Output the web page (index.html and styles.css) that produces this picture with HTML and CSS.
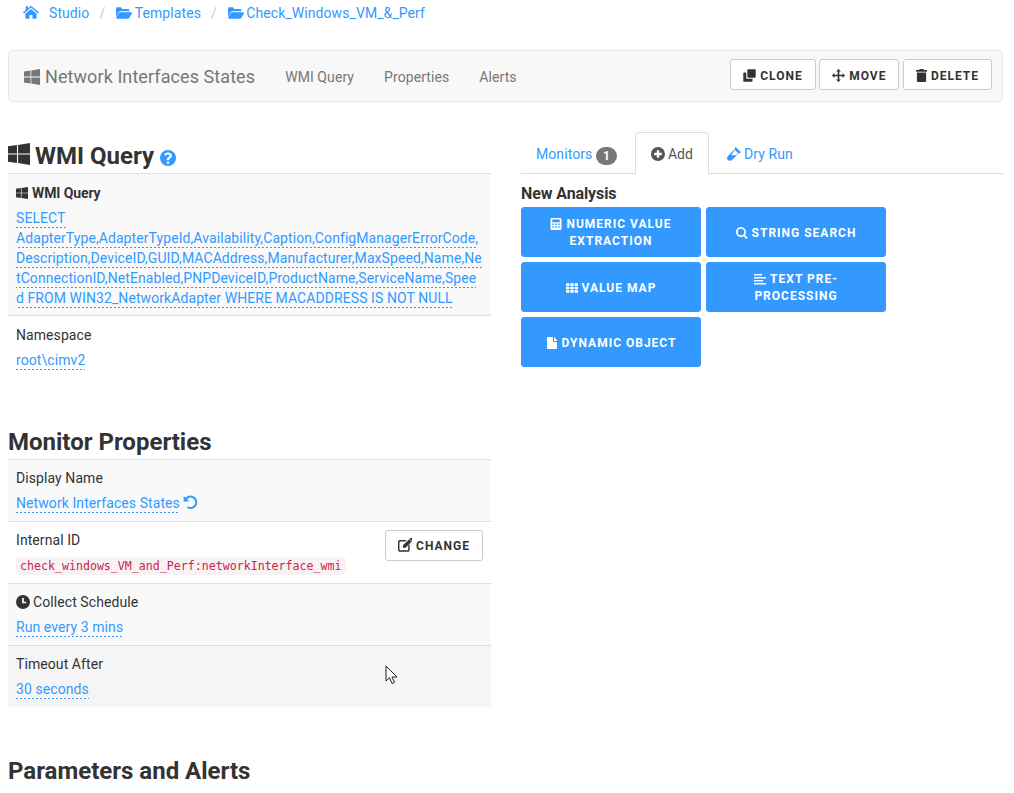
FILE: index.html
```html
<!DOCTYPE html>
<html lang="en">
<head>
<meta charset="utf-8">
<title>Network Interfaces States</title>
<link rel="stylesheet" href="styles.css">
</head>
<body>
<svg class="sprite" aria-hidden="true">
  <defs>
    <symbol id="i-win" viewBox="0 0 24 24"><path d="M0 3.6 9.8 2.2V11.4H0ZM11 2.1 24 0V11.4H11ZM0 12.6H9.8V21.8L0 20.4ZM11 12.6H24V24L11 21.9Z"/></symbol>
    <symbol id="i-home" viewBox="0 0 24 24"><path d="M12 2.6 24 12.4l-1.4 1.7L12 5.4 1.4 14.1 0 12.4 4 9.1V3.4h3.4v2.9ZM12 7.4l8.4 6.9V21a1 1 0 0 1-1 1h-5.2v-5.4H9.8V22H4.6a1 1 0 0 1-1-1v-6.7Z"/></symbol>
    <symbol id="i-folder" viewBox="0 0 24 24"><path d="M0 18.5V5.5C0 4.400 .8 3.500 2 3.500H7.500L9.500 6H18C19.100 6 20 6.900 20 8V9.500H6.500C5.400 9.500 4.500 10 4 11ZM6 11H22.800C23.800 11 24.300 11.800 23.800 12.600L20.200 19.300C19.800 20 19 20.500 18.200 20.500H1.200C.4 20.500 0 19.800.4 19.100L4.200 12.100C4.600 11.400 5.200 11 6 11Z"/></symbol>
    <symbol id="i-clone" viewBox="0 0 24 24"><path d="M8 2.500C8 1.400 8.900.5 10 .5H21.500C22.600.5 23.500 1.400 23.500 2.500V14C23.500 15.100 22.600 16 21.500 16H10C8.900 16 8 15.100 8 14Z"/><path d="M6 6.500V16C6 17.100 6.900 18 8 18H17.500V21.500C17.500 22.600 16.600 23.500 15.500 23.500H2.500C1.400 23.500.5 22.600.5 21.500V8.500C.5 7.400 1.400 6.500 2.500 6.500Z"/></symbol>
    <symbol id="i-move" viewBox="0 0 24 24"><path d="M12 0 16.500 4.500H13.500V10.500H19.500V7.500L24 12 19.500 16.500V13.500H13.500V19.500H16.500L12 24 7.500 19.500H10.500V13.500H4.500V16.500L0 12 4.500 7.500V10.500H10.500V4.500H7.500Z"/></symbol>
    <symbol id="i-trash" viewBox="2 0 20 24"><path d="M8.500 0H15.500L16.500 2H22V5H2V2H7.500ZM3.500 6.500H20.500V21.500C20.500 22.900 19.400 24 18 24H6C4.600 24 3.500 22.900 3.500 21.500Z"/></symbol>
    <symbol id="i-help" viewBox="0 0 24 24"><path fill-rule="evenodd" d="M12 0a12 12 0 1 1 0 24a12 12 0 0 1 0-24ZM10.200 17.500v3.300h3.600v-3.300ZM12 3.600c-3 0-5 1.500-5.800 3.800l2.800 1.300c.5-1.300 1.500-2 2.800-2 1.400 0 2.400.8 2.400 1.900 0 1-.7 1.500-1.800 2.200-1.400.9-2.200 1.900-2.200 3.500v1h3.500v-.6c0-.8.500-1.200 1.500-1.800 1.500-1 2.700-2.100 2.700-4.300 0-3-2.600-5-5.700-5Z"/></symbol>
    <symbol id="i-plus" viewBox="0 0 24 24"><path fill-rule="evenodd" d="M12 0a12 12 0 1 1 0 24a12 12 0 0 1 0-24ZM10 5.500V10H5.500V14H10V18.500H14V14H18.500V10H14V5.500Z"/></symbol>
    <symbol id="i-flask" viewBox="0 0 24 24"><path fill-rule="evenodd" d="M15 0 24 9 22 10.800 21 9.800 9 21.800C6.800 24 3.200 24 1.300 22.400C-.6 20.500-.2 17.200 2 15L14.200 3 13.200 1.900ZM7 14H15.800L19 10.500 13.500 5.200Z"/></symbol>
    <symbol id="i-calc" viewBox="0 0 24 24"><path fill-rule="evenodd" d="M4 0H20C21.700 0 23 1.300 23 3V21C23 22.700 21.700 24 20 24H4C2.300 24 1 22.700 1 21V3C1 1.300 2.300 0 4 0ZM4.500 3V8.500H19.500V3ZM4.500 11V14H7.500V11ZM10.500 11V14H13.500V11ZM16.500 11V14H19.500V11ZM4.500 16.500V19.500H7.500V16.500ZM10.500 16.500V19.500H13.500V16.500ZM16.500 16.500V19.500H19.500V16.500Z"/></symbol>
    <symbol id="i-search" viewBox="0 0 24 24"><path fill-rule="evenodd" d="M10 0a10 10 0 0 1 8 16l5.500 5.500-2.500 2.500L15.500 18.300A10 10 0 1 1 10 0ZM10 3.500a6.500 6.500 0 1 0 0 13a6.500 6.500 0 0 0 0-13Z"/></symbol>
    <symbol id="i-th" viewBox="0 0 24 24"><path d="M0 2.500H6.800V8H0ZM8.600 2.500H15.400V8H8.600ZM17.200 2.500H24V8H17.200ZM0 9.300H6.800V14.700H0ZM8.600 9.300H15.400V14.700H8.600ZM17.200 9.300H24V14.700H17.200ZM0 16H6.800V21.500H0ZM8.600 16H15.400V21.500H8.600ZM17.200 16H24V21.500H17.200Z"/></symbol>
    <symbol id="i-align" viewBox="0 0 24 24"><path d="M0 2H16V5H0ZM0 8H24V11H0ZM0 14H18V17H0ZM0 20H24V23H0Z"/></symbol>
    <symbol id="i-file" viewBox="0 0 24 24"><path d="M3 0H14V8C14 9.100 14.900 10 16 10H22V22.500C22 23.300 21.300 24 20.500 24H3.500C2.700 24 2 23.300 2 22.500V1.500C2 .7 2.700 0 3.500 0ZM16 0 22 6V8H16Z"/></symbol>
    <symbol id="i-undo" viewBox="0 0 24 24"><path d="M1 1.500 4 4.500A10.800 10.800 0 1 1 6 20.500L8.200 17.900A7.300 7.300 0 1 0 6.600 7L10 10.500H1Z"/></symbol>
    <symbol id="i-edit" viewBox="0 0 24 24"><path d="M3.500 3.500H15L12.500 6H4C3.300 6 2.500 6.700 2.500 7.500V19.500C2.500 20.300 3.300 21 4 21H16C16.800 21 17.500 20.300 17.500 19.500V13L20 10.500V20C20 22 18.400 23.500 16.500 23.500H3.500C1.600 23.500 0 22 0 20V7C0 5 1.600 3.500 3.500 3.500ZM19.300 2 23.500 6.200 13 16.800H8.500V12.500ZM21 0 24 0 24 4 23 4.700 19.800 1.300Z"/></symbol>
    <symbol id="i-clock" viewBox="0 0 24 24"><path fill-rule="evenodd" d="M12 0a12 12 0 1 1 0 24a12 12 0 0 1 0-24ZM10.500 5V14H17.500V11.500H13.500V5Z"/></symbol>
  </defs>
</svg>

<ol class="crumbs">
  <li class="crumb"><a class="link" href="#"><svg class="ico ico-home"><use href="#i-home"/></svg><span class="home-label">Studio</span></a></li>
  <li class="crumb-sep">/</li>
  <li class="crumb"><a class="link" href="#"><svg class="ico ico-folder"><use href="#i-folder"/></svg>Templates</a></li>
  <li class="crumb-sep">/</li>
  <li class="crumb"><a class="link" href="#"><svg class="ico ico-folder"><use href="#i-folder"/></svg>Check_Windows_VM_&amp;_Perf</a></li>
</ol>

<nav class="navbar">
  <a class="brand" href="#"><svg class="ico ico-brand"><use href="#i-win"/></svg>Network Interfaces States</a>
  <a class="nav-link" href="#">WMI Query</a>
  <a class="nav-link" href="#">Properties</a>
  <a class="nav-link" href="#">Alerts</a>
  <div class="nav-actions">
    <button class="btn"><svg class="ico ico-btn"><use href="#i-clone"/></svg>Clone</button>
    <button class="btn"><svg class="ico ico-btn"><use href="#i-move"/></svg>Move</button>
    <button class="btn"><svg class="ico ico-btn ico-narrow"><use href="#i-trash"/></svg>Delete</button>
  </div>
</nav>

<main class="columns">
  <div class="col-left">
    <h2 class="heading heading-first"><svg class="ico ico-head"><use href="#i-win"/></svg>WMI Query <svg class="ico ico-help"><use href="#i-help"/></svg></h2>
    <section class="table table-query">
      <div class="row row-odd">
        <div class="label label-strong"><svg class="ico ico-small-win"><use href="#i-win"/></svg>WMI Query</div>
        <div class="value"><a class="editable" href="#">SELECT AdapterType,AdapterTypeId,Availability,Caption,ConfigManagerErrorCode,Description,DeviceID,GUID,MACAddress,Manufacturer,MaxSpeed,Name,NetConnectionID,NetEnabled,PNPDeviceID,ProductName,ServiceName,Speed FROM WIN32_NetworkAdapter WHERE MACADDRESS IS NOT NULL</a></div>
      </div>
      <div class="row">
        <div class="label">Namespace</div>
        <div class="value"><a class="editable" href="#">root\cimv2</a></div>
      </div>
    </section>

    <h2 class="heading heading-monitor">Monitor Properties</h2>
    <section class="table">
      <div class="row row-odd">
        <div class="label">Display Name</div>
        <div class="value"><a class="editable" href="#">Network Interfaces States</a> <svg class="ico ico-undo"><use href="#i-undo"/></svg></div>
      </div>
      <div class="row row-split">
        <div>
          <div class="label">Internal ID</div>
          <div class="value"><code class="code">check_windows_VM_and_Perf:networkInterface_wmi</code></div>
        </div>
        <button class="btn"><svg class="ico ico-btn ico-edit"><use href="#i-edit"/></svg>Change</button>
      </div>
      <div class="row row-odd">
        <div class="label"><svg class="ico ico-clock"><use href="#i-clock"/></svg>Collect Schedule</div>
        <div class="value"><a class="editable" href="#">Run every 3 mins</a></div>
      </div>
      <div class="row row-hover">
        <div class="label">Timeout After</div>
        <div class="value"><a class="editable" href="#">30 seconds</a></div>
      </div>
    </section>

    <h2 class="heading heading-params">Parameters and Alerts</h2>
  </div>

  <div class="col-right">
    <ul class="tabs">
      <li class="tab"><a class="link" href="#">Monitors <span class="badge">1</span></a></li>
      <li class="tab tab-active"><svg class="ico ico-tab"><use href="#i-plus"/></svg>Add</li>
      <li class="tab"><a class="link" href="#"><svg class="ico ico-tab"><use href="#i-flask"/></svg>Dry Run</a></li>
    </ul>
    <h4 class="subhead">New Analysis</h4>
    <div class="analysis">
      <button class="btn-primary"><svg class="ico ico-btn"><use href="#i-calc"/></svg>Numeric Value Extraction</button>
      <button class="btn-primary"><svg class="ico ico-btn"><use href="#i-search"/></svg>String Search</button>
      <button class="btn-primary"><svg class="ico ico-btn"><use href="#i-th"/></svg>Value Map</button>
      <button class="btn-primary"><svg class="ico ico-btn"><use href="#i-align"/></svg>Text Pre-Processing</button>
      <button class="btn-primary"><svg class="ico ico-btn"><use href="#i-file"/></svg>Dynamic Object</button>
    </div>
  </div>
</main>

<svg class="cursor" viewBox="0 0 13 20" aria-hidden="true"><path d="M1 1V16L4.500 12.800 7 18.500 9.500 17.400 7 12H12Z" fill="#fff" stroke="#222" stroke-width="1"/></svg>
</body>
</html>
```

FILE: styles.css
```css
* { box-sizing: border-box; }

html, body { height: 793px; overflow: hidden; }

body {
  margin: 0;
  padding: 0 11px 0 8px;
  position: relative;
  font-family: Roboto, "Liberation Sans", sans-serif;
  font-size: 14px;
  line-height: 20px;
  letter-spacing: .08px;
  color: #333;
  background: #fff;
}

.sprite { position: absolute; width: 0; height: 0; }

.ico { fill: currentColor; display: inline-block; vertical-align: -2px; }

.link { color: #3399ff; text-decoration: none; }

.crumbs {
  list-style: none;
  margin: 0;
  padding: 3px 15px 0;
  height: 50px;
  display: flex;
  align-items: flex-start;
}

.crumb-sep { color: #ccc; padding: 0 11px 0 10px; }

.ico-home { width: 16px; height: 16px; margin-right: 10px; }
.ico-folder { width: 16px; height: 16px; margin-right: 2.5px; vertical-align: -3px; }

.navbar {
  height: 52px;
  display: flex;
  align-items: center;
  padding: 2px 10px 0 15px;
  background: #f8f8f8;
  border: 1px solid #e7e7e7;
  border-radius: 4px;
}

.brand {
  font-size: 18px;
  color: #777;
  text-decoration: none;
  margin-right: 30px;
}

.ico-brand { width: 16px; height: 16px; margin-right: 5px; }

.nav-link {
  color: #777;
  text-decoration: none;
  margin-right: 30px;
}

.nav-actions {
  margin-left: auto;
  margin-top: -5px;
  display: flex;
  gap: 3.5px;
}

.btn {
  height: 31px;
  padding: 0 12px;
  background: #fff;
  border: 1px solid #ccc;
  border-radius: 3px;
  color: #333;
  font-family: inherit;
  font-size: 12px;
  font-weight: 700;
  letter-spacing: 1px;
  text-transform: uppercase;
  white-space: nowrap;
}

.nav-actions .btn { padding-top: 2px; }

.ico-btn { width: 13px; height: 13px; margin-right: 4px; }
.ico-narrow { width: 11px; height: 13px; }
.ico-edit { width: 14px; height: 14px; }

.columns {
  display: grid;
  grid-template-columns: 483px 482px;
  column-gap: 30px;
  padding-top: 30px;
}

.heading {
  margin: 0;
  font-size: 24px;
  line-height: 26px;
  font-weight: 700;
  letter-spacing: 0;
  color: #333;
}

.heading-first { padding-top: 11px; padding-bottom: 4px; }
.heading-monitor { padding-top: 52px; padding-bottom: 4px; }
.heading-params { padding-top: 51px; }

.ico-head { width: 22px; height: 22px; margin-right: 5px; vertical-align: -1px; }
.ico-help { width: 16px; height: 16px; color: #3399ff; vertical-align: -2px; }

.row {
  padding: 8px;
  border-top: 1px solid #ddd;
}

.table-query .row { padding-top: 9px; padding-bottom: 7px; }

.row-odd { background: #f9f9f9; }
.row-hover { background: #f5f5f5; }

.row-split {
  display: flex;
  justify-content: space-between;
  align-items: flex-start;
}

.label { margin-bottom: 5px; }
.label-strong { font-weight: 700; letter-spacing: -.1px; }

.ico-small-win { width: 12px; height: 12px; margin-right: 4px; vertical-align: -1px; }
.ico-clock { width: 14px; height: 14px; margin-right: 3px; }

.value { overflow-wrap: anywhere; }

.editable {
  color: #3399ff;
  text-decoration: none;
  padding-bottom: 2px;
  background: linear-gradient(to right, #3399ff 50%, transparent 50%) left bottom / 4px 1px repeat-x;
}

.ico-undo { width: 15px; height: 15px; color: #3399ff; vertical-align: -2px; }

.code {
  display: inline-block;
  font-family: "DejaVu Sans Mono", monospace;
  font-size: 11.62px;
  letter-spacing: 0;
  line-height: 18px;
  padding: 0 4px;
  color: #c7254e;
  background: #f9f2f4;
  border-radius: 4px;
}

.tabs {
  list-style: none;
  margin: 0;
  padding: 0;
  height: 42px;
  display: flex;
  gap: 2px;
  border-bottom: 1px solid #ddd;
}

.tab {
  padding: 11px 15px 0;
  height: 42px;
  border: 1px solid transparent;
  border-bottom: 0;
}

.tab:first-child { padding-left: 14px; }

.tab-active {
  background: #fff;
  border-color: #ddd;
  border-radius: 4px 4px 0 0;
  color: #555;
}

.badge {
  display: inline-block;
  min-width: 20px;
  padding: 3px 7px;
  font-size: 12px;
  line-height: 12px;
  font-weight: 700;
  color: #fff;
  background: #777;
  border-radius: 10px;
  text-align: center;
  vertical-align: -1px;
}

.ico-tab { width: 14px; height: 14px; margin-right: 3px; }

.subhead {
  margin: 0;
  padding-top: 9px;
  height: 33px;
  font-size: 16px;
  line-height: 22px;
  font-weight: 700;
  letter-spacing: -.1px;
  color: #333;
}

.analysis {
  display: grid;
  grid-template-columns: 180px 180px;
  grid-auto-rows: 50px;
  gap: 5px;
}

.btn-primary {
  padding: 2px 12px 0;
  background: #3399ff;
  border: 1px solid #3399ff;
  border-radius: 3px;
  color: #fff;
  font-family: inherit;
  font-size: 12px;
  line-height: 17px;
  font-weight: 700;
  letter-spacing: 1px;
  text-transform: uppercase;
}

.btn-primary .ico-btn { width: 12px; height: 12px; }

.cursor {
  position: absolute;
  left: 385px;
  top: 665px;
  width: 13px;
  height: 20px;
}
```
